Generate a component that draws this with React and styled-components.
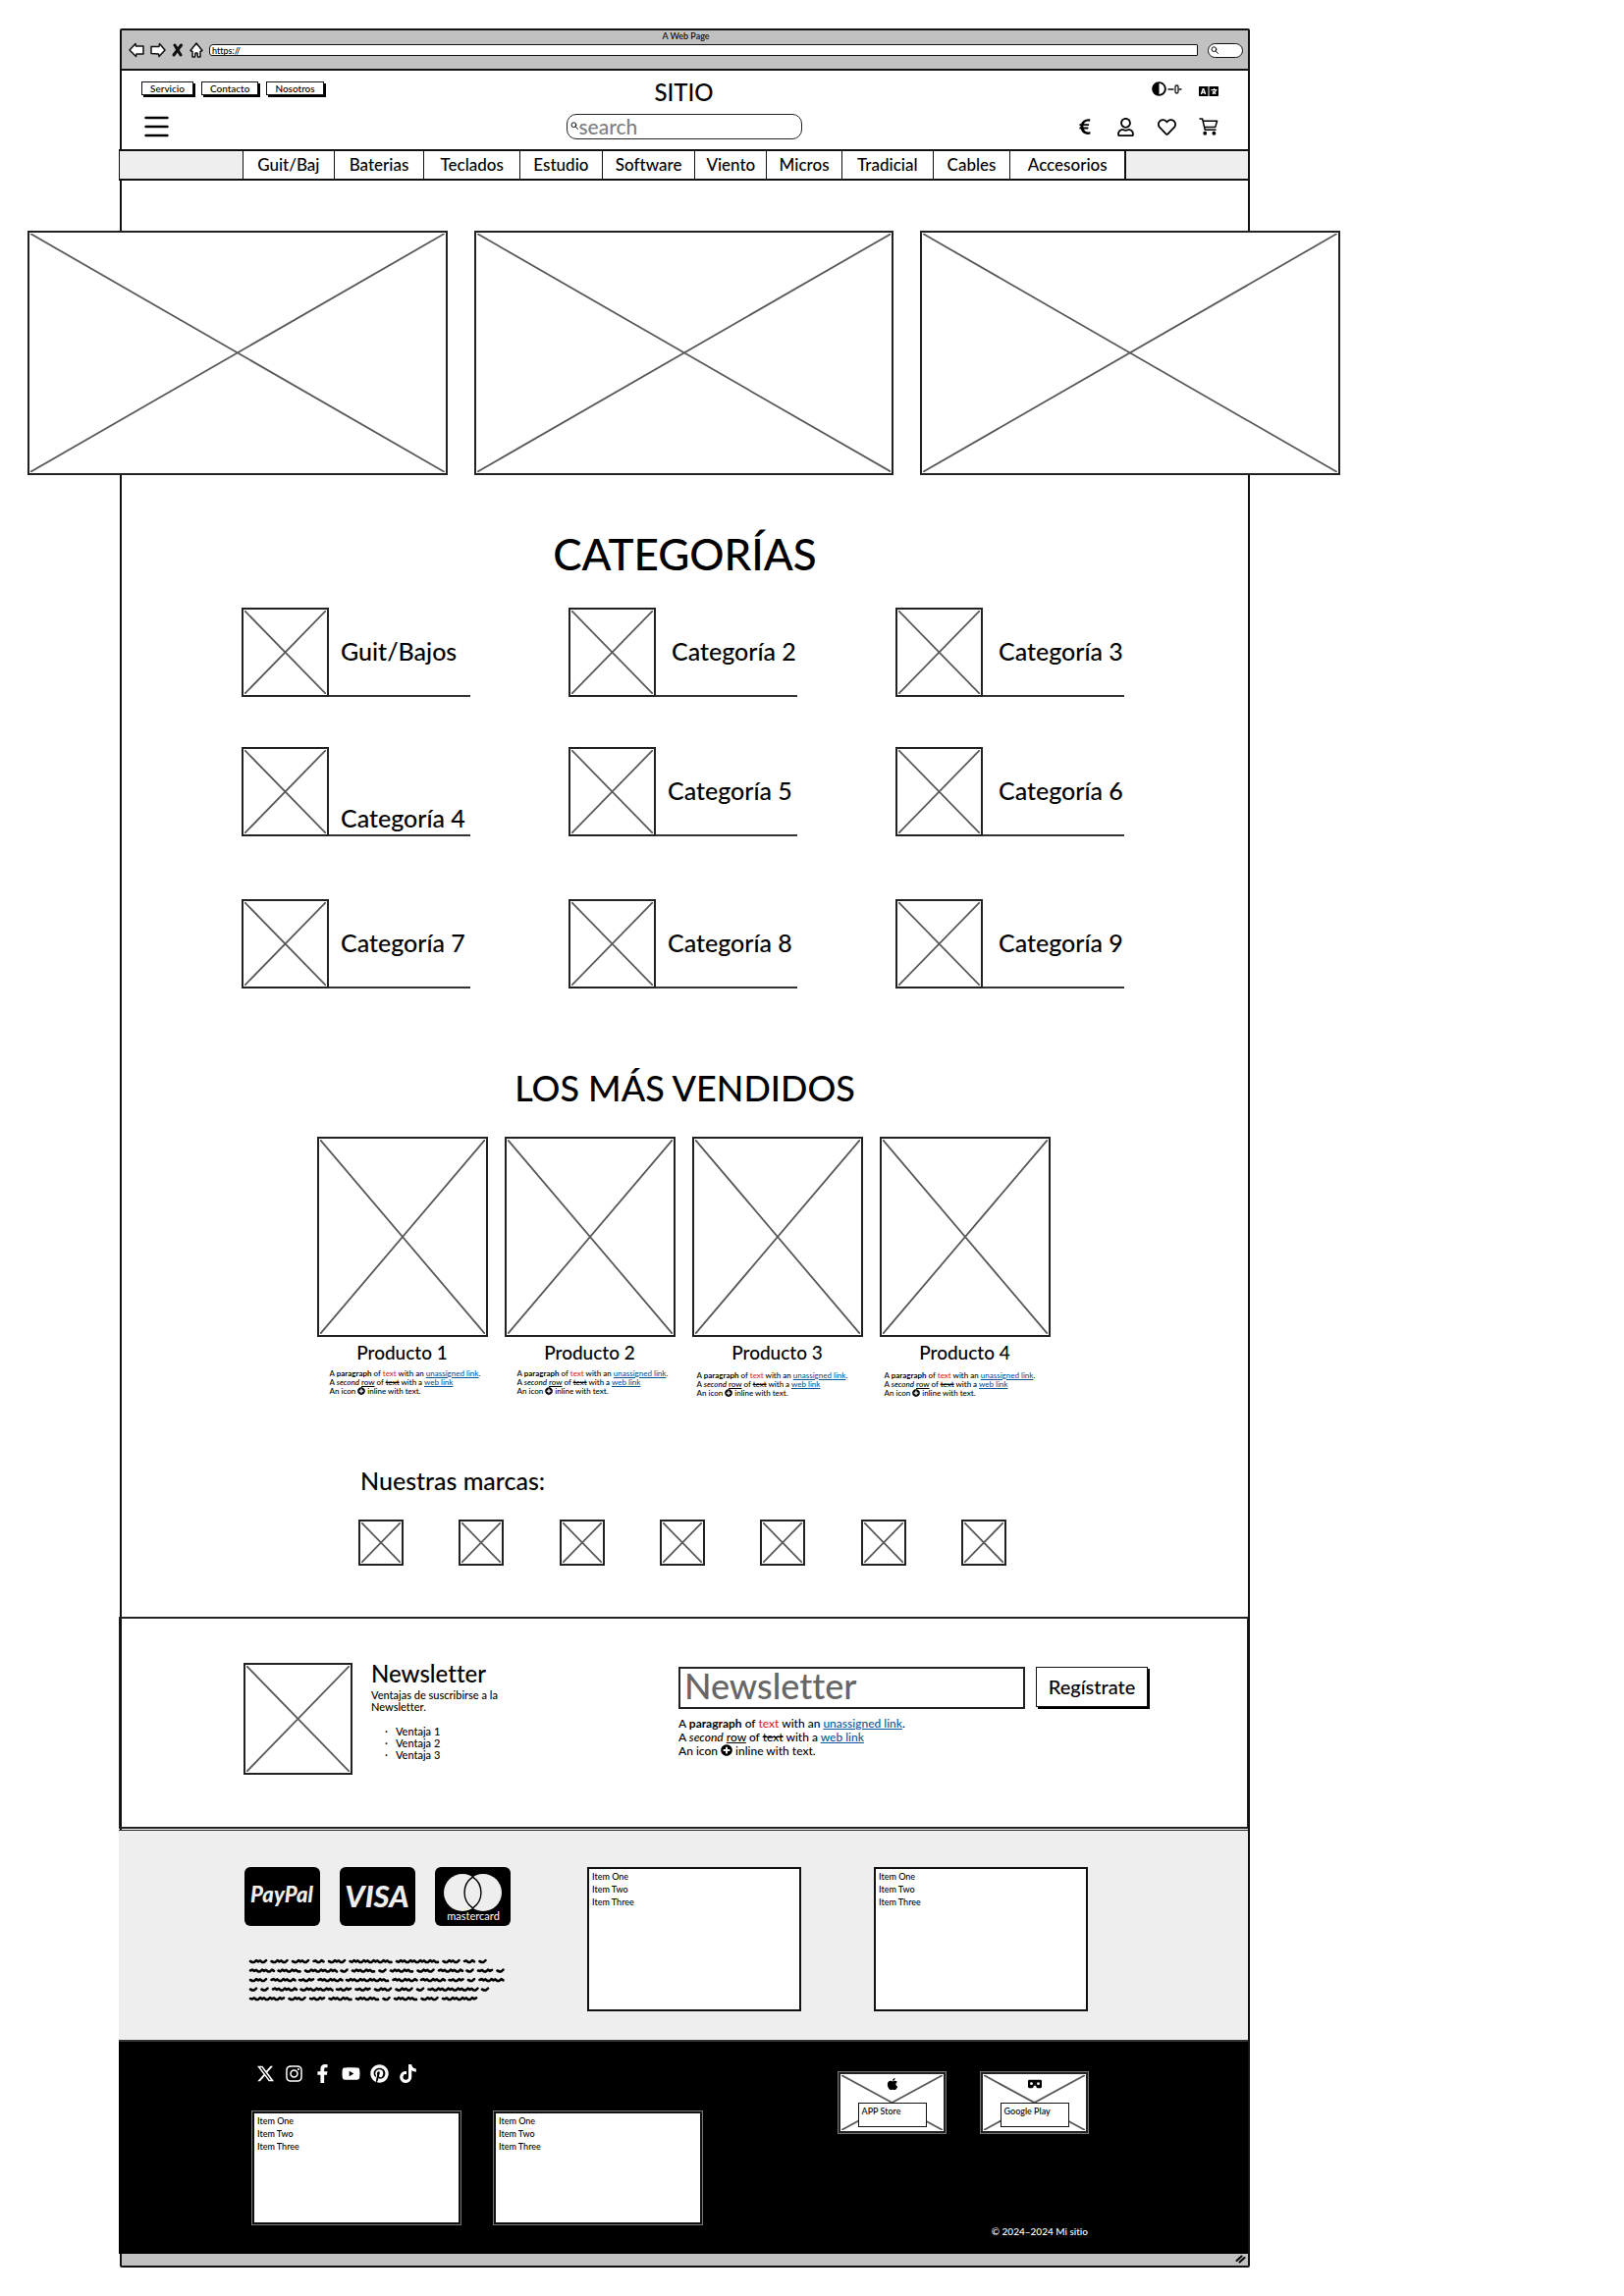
import React from "react";
import styled, { createGlobalStyle } from "styled-components";
import {
  FaAdjust,
  FaApple,
  FaEuroSign,
  FaFacebookF,
  FaInstagram,
  FaLanguage,
  FaPinterest,
  FaPlusCircle,
  FaRegHeart,
  FaRegUser,
  FaTiktok,
  FaYoutube,
} from "react-icons/fa";
import { FaXTwitter, FaVrCardboard } from "react-icons/fa6";

const GlobalStyle = createGlobalStyle`
  *, *::before, *::after { box-sizing: border-box; }
  body {
    margin: 0;
    background: #fff;
    color: #000;
    font-family: Lato, "Open Sans", sans-serif;
    font-weight: 500;
    font-variant-ligatures: none;
  }
  h1, h2, h3, p, ul { margin: 0; padding: 0; font-weight: 500; }
  ul { list-style: none; }
  button, input { font: inherit; color: inherit; margin: 0; }
  input { font-variant-ligatures: none; }
  svg { display: block; }
`;

/* ---------- browser window ---------- */

const Desktop = styled.div`
  padding: 29px 381px 30px 122px;
`;

const Window = styled.div`
  display: flex;
  flex-direction: column;
  border: 2px solid #111;
  border-radius: 2px;
`;

const Toolbar = styled.header`
  background: #c1c1c1;
  border-bottom: 2px solid #111;
  padding: 0 5px 11px 7px;
`;

const WindowTitle = styled.div`
  font-size: 9px;
  line-height: 12px;
  text-align: center;
`;

const AddressRow = styled.div`
  display: flex;
  align-items: center;
  gap: 6px;
  height: 16px;
`;

const PlainButton = styled.button`
  display: flex;
  align-items: center;
  justify-content: center;
  gap: ${(p) => p.$gap || 0}px;
  padding: 0;
  border: 0;
  background: none;
  cursor: pointer;
`;

const UrlInput = styled.input`
  flex: 1;
  min-width: 0;
  height: 12px;
  padding: 0 2px;
  border: 1px solid #111;
  border-radius: 4px 1px 1px 3px;
  background: #fff;
  font-size: 9px;
  line-height: 10px;
`;

const PillSearch = styled.label`
  display: flex;
  align-items: center;
  width: 36px;
  height: 15px;
  margin-left: 4px;
  padding: 0 2px;
  border: 1px solid #111;
  border-radius: 8px;
  background: #fff;
`;

const BareInput = styled.input`
  flex: 1;
  min-width: 0;
  height: 100%;
  padding: 0;
  border: 0;
  outline: 0;
  background: none;
  font-size: ${(p) => p.$size || 8}px;
  line-height: 22px;
  &::placeholder { color: #808080; opacity: 1; }
`;

const StatusBar = styled.div`
  display: flex;
  justify-content: flex-end;
  align-items: center;
  height: 12px;
  padding: 0 2px;
  background: #c1c1c1;
`;

/* ---------- site header ---------- */

const SiteHeader = styled.div`
  display: grid;
  grid-template-columns: 1fr 240px 1fr;
  grid-template-rows: 22px 26px;
  row-gap: 11px;
  padding: 11px 22px 10px 20px;
`;

const Group = styled.div`
  display: flex;
  align-items: ${(p) => p.$align || "center"};
  gap: ${(p) => p.$gap}px;
`;

const RightGroup = styled(Group)`
  justify-content: flex-end;
  padding-right: 8px;
`;

const SmallButton = styled.button`
  height: 14px;
  padding: 0 8px;
  border: 1px solid #111;
  background: #fff;
  box-shadow: 2px 2px 0 #000;
  font-size: 10px;
  line-height: 12px;
  cursor: pointer;
`;

const SiteName = styled.h1`
  font-size: 24px;
  line-height: 22px;
  text-align: center;
`;

const MenuButton = styled(PlainButton)`
  margin-left: 3px;
`;

const SearchBox = styled.label`
  display: flex;
  align-items: center;
  gap: 1px;
  padding: 0 3px 2px;
  border: 1px solid #222;
  border-radius: 10px;
`;

const NavBand = styled.nav`
  display: flex;
  height: 32px;
  margin-left: -3px;
  padding: 0 124px 0 125px;
  border: solid #111;
  border-width: 2px 0 2px 1px;
  background: #eee;
`;

const NavList = styled.ul`
  flex: 1;
  display: grid;
  grid-template-columns: 92fr 92fr 98fr 84fr 95fr 73fr 77fr 93fr 79fr 117fr;
  border-left: 1px solid #111;
  border-right: 2px solid #111;
  background: #fff;
`;

const NavItem = styled.li`
  display: flex;
  & + & { border-left: 1px solid #111; }
`;

const NavLink = styled.a`
  flex: 1;
  font-size: 17px;
  line-height: 28px;
  text-align: center;
  color: inherit;
  text-decoration: none;
`;

/* ---------- shared pieces ---------- */

const Frame = styled.div`
  flex: ${(p) => p.$flex || "none"};
  width: ${(p) => (p.$w ? `${p.$w}px` : "auto")};
  height: ${(p) => (p.$h ? `${p.$h}px` : "auto")};
  aspect-ratio: ${(p) => p.$ratio || "auto"};
  padding: 1px;
  border: 2px solid #222;
  background: #fff;
`;

const Cross = styled.svg`
  width: 100%;
  height: 100%;
`;

const SectionTitle = styled.h2`
  font-size: ${(p) => p.$size}px;
  line-height: ${(p) => p.$line}px;
  text-align: center;
`;

const Rich = styled.div`
  font-size: ${(p) => p.$size}px;
  line-height: ${(p) => p.$line}px;
  white-space: nowrap;
  a { color: #0b5699; }
  svg { display: inline-block; vertical-align: -1px; }
`;

const Red = styled.span`
  color: #d9252b;
`;

/* ---------- page body ---------- */

const Hero = styled.section`
  display: flex;
  gap: 27px;
  margin: 51px -94px 55px -96px;
`;

const Categories = styled.section`
  padding: 30px 126px 15px 122px;
`;

const CategoryRow = styled.ul`
  display: grid;
  grid-template-columns: repeat(3, 1fr);
  column-gap: 100px;
  margin-bottom: ${(p) => p.$after}px;
`;

const Category = styled.li`
  display: flex;
`;

const CategoryName = styled.a`
  flex: 1;
  display: flex;
  align-items: ${(p) => (p.$low ? "flex-end" : "center")};
  padding: 2px 0 2px ${(p) => (p.$far ? 16 : 12)}px;
  border-bottom: 2px solid #333;
  font-size: 25px;
  line-height: 30px;
  white-space: nowrap;
  color: inherit;
  text-decoration: none;
`;

const Products = styled.div`
  display: flex;
  justify-content: center;
  gap: 17px;
  padding: 28px 3px 69px 0;
`;

const Product = styled.article`
  width: 174px;
`;

const ProductName = styled.h3`
  margin-top: 4px;
  font-size: 19px;
  line-height: 24px;
  text-align: center;
`;

const ProductText = styled.div`
  padding: ${(p) => (p.$shifted ? "7px 0 0 5px" : "5px 0 0 13px")};
`;

const Brands = styled.section`
  align-self: center;
  width: 665px;
  padding: 0 5px 52px 0;
`;

const BrandsTitle = styled.h2`
  margin-bottom: 25px;
  padding-left: 2px;
  font-size: 25px;
  line-height: 30px;
`;

const BrandRow = styled.div`
  display: flex;
  justify-content: space-between;
`;

const NewsletterBand = styled.section`
  display: flex;
  justify-content: space-between;
  margin: 0 0 1px -3px;
  padding: 45px 101px 53px 126px;
  border: solid #222;
  border-width: 2px 1px 2px 1px;
`;

const NewsletterTitle = styled.h2`
  margin-bottom: 5px;
  font-size: 24px;
  line-height: 22px;
`;

const NewsletterCopy = styled.div`
  width: 136px;
  font-size: 11px;
  line-height: 12px;
`;

const BulletList = styled.ul`
  margin-top: 13px;
  padding-left: 14px;
`;

const Bullet = styled.li`
  display: flex;
  gap: 8px;
  &::before { content: "·"; }
`;

const SignUp = styled.form`
  display: flex;
  gap: 11px;
  margin: 4px 0 8px;
`;

const EmailInput = styled.input`
  width: 353px;
  height: 43px;
  padding: 0 4px 4px;
  border: 2px solid #222;
  font-size: 36px;
  &::placeholder { color: #666; opacity: 1; }
`;

const SignUpButton = styled.button`
  width: 114px;
  height: 41px;
  padding: 0;
  border: 1px solid #111;
  background: #fff;
  box-shadow: 2px 2px 0 #000;
  font-size: 20px;
  cursor: pointer;
`;

/* ---------- footer ---------- */

const PaymentBand = styled.section`
  display: flex;
  gap: 74px;
  margin-left: -3px;
  padding: 37px 163px 29px 128px;
  border-top: 1px solid #222;
  border-bottom: 2px solid #333;
  background: #eee;
`;

const Payments = styled.div`
  flex: 1;
`;

const CardRow = styled.div`
  display: flex;
  gap: 20px;
  margin-bottom: 32px;
`;

const ItemList = styled.ul`
  width: ${(p) => p.$w}px;
  height: ${(p) => p.$h}px;
  padding: 1px 3px;
  border: 2px solid #111;
  outline: ${(p) => (p.$outlined ? "1px solid #777" : "none")};
  background: #fff;
  color: #000;
  font-size: 9px;
  line-height: 13px;
`;

const Footer = styled.footer`
  display: flex;
  justify-content: space-between;
  margin-left: -3px;
  padding: 22px 163px 16px 136px;
  background: #000;
  color: #fff;
`;

const FooterSide = styled.div`
  display: flex;
  flex-direction: column;
`;

const Social = styled.div`
  display: flex;
  gap: 10px;
  height: 22px;
  margin: 0 0 27px 4px;
`;

const SocialLink = styled.a`
  display: flex;
  align-items: center;
  justify-content: center;
  width: 19px;
  color: #fff;
`;

const FooterLists = styled.div`
  display: flex;
  gap: 34px;
  margin-bottom: 14px;
`;

const StoreSide = styled(FooterSide)`
  justify-content: space-between;
  padding-top: 9px;
`;

const StoreRow = styled.div`
  display: flex;
  gap: 36px;
`;

const StoreLink = styled.a`
  display: grid;
  width: 109px;
  outline: 1px solid #777;
  color: #000;
  text-decoration: none;
  & > * { grid-area: 1 / 1; }
`;

const StoreContent = styled.span`
  display: flex;
  flex-direction: column;
  align-items: center;
  justify-content: space-between;
  padding: 5px 0 6px;
`;

const StoreName = styled.span`
  width: 70px;
  height: 25px;
  padding: 1px 3px;
  border: 1px solid #111;
  background: #fff;
  font-size: 9px;
  line-height: 13px;
`;

const Copyright = styled.small`
  font-size: 10px;
  line-height: 14px;
  text-align: right;
`;

/* ---------- drawings ---------- */

const Placeholder = (props) => (
  <Frame {...props}>
    <Cross viewBox="0 0 100 100" preserveAspectRatio="none" aria-hidden="true">
      <path
        d="M0 0 L100 100 M100 0 L0 100"
        fill="none"
        stroke="#5a5a5a"
        strokeWidth="1.8"
        vectorEffect="non-scaling-stroke"
      />
    </Cross>
  </Frame>
);

const outline = { fill: "#fff", stroke: "#111", strokeWidth: 1.5, strokeLinejoin: "round" };

const ArrowLeft = () => (
  <svg width="16" height="16" viewBox="0 0 16 16">
    <path d="M1 8 L7 1.5 L7.5 4 L15 4 L15 12 L8 12 L7.5 14.5 Z" {...outline} />
  </svg>
);

const ArrowRight = () => (
  <svg width="16" height="16" viewBox="0 0 16 16">
    <path d="M15 8 L9.5 1.5 L9 4.5 L1 4.5 L1 11.5 L8.5 12 L9 14.5 Z" {...outline} />
  </svg>
);

const Stop = () => (
  <svg width="12" height="14" viewBox="0 0 12 14">
    <path d="M3 2 L9 12 M9.5 2 L2 12" stroke="#111" strokeWidth="3" strokeLinecap="round" />
  </svg>
);

const Home = () => (
  <svg width="14" height="16" viewBox="0 0 14 16">
    <path d="M7 1 L13 8.5 L11 9.5 L11 15 L8.5 15 L8 11 L6 11 L5.5 15 L3 15 L3 9.5 L1 8.5 Z" {...outline} />
  </svg>
);

const Magnifier = ({ size = 8 }) => (
  <svg width={size} height={size} viewBox="0 0 8 8" fill="none" stroke="#111" strokeLinecap="round">
    <circle cx="3.4" cy="3.2" r="2.4" />
    <path d="M5.2 5 L7.4 7.4" />
  </svg>
);

const Hamburger = () => (
  <svg width="25" height="22" viewBox="0 0 25 22">
    <path d="M1.5 2 H23.5 M1.5 11 H23.5 M1.5 20 H23.5" stroke="#000" strokeWidth="2.4" strokeLinecap="round" />
  </svg>
);

const SliderMark = () => (
  <svg width="15" height="10" viewBox="0 0 15 10" fill="none" stroke="#111" strokeWidth="1.3">
    <path d="M0.5 5 H6.5 M11.5 5 H14.5" />
    <rect x="8" y="1" width="3" height="8" rx="1.4" />
  </svg>
);

const Cart = () => (
  <svg width="20" height="18" viewBox="0 0 20 18" fill="none" stroke="#000" strokeWidth="1.5" strokeLinecap="round" strokeLinejoin="round">
    <path d="M1 1 H3.6 L6.2 12.2 H17 M4.2 3.2 H18.6 L16.8 9.4 H5.6" />
    <circle cx="6.2" cy="15.8" r="1.2" fill="#000" />
    <circle cx="15.4" cy="15.8" r="1.2" fill="#000" />
  </svg>
);

const CardSvg = ({ label, children }) => (
  <svg width="77" height="60" viewBox="0 0 77 60" role="img" aria-label={label}>
    <rect width="77" height="60" rx="6" fill="#000" />
    {children}
  </svg>
);

const cardText = { fill: "#eee", textAnchor: "middle", fontFamily: "Lato, sans-serif" };

const PayPalCard = () => (
  <CardSvg label="PayPal">
    <text x="38" y="36" fontSize="22" fontWeight="900" fontStyle="italic" {...cardText}>PayPal</text>
  </CardSvg>
);

const VisaCard = () => (
  <CardSvg label="VISA">
    <text x="38" y="41" fontSize="31" fontWeight="900" fontStyle="italic" {...cardText}>VISA</text>
  </CardSvg>
);

const MastercardCard = () => (
  <CardSvg label="mastercard">
    <circle cx="28" cy="26" r="19" fill="#eee" />
    <circle cx="49" cy="26" r="19" fill="#eee" />
    <path
      d="M38.5 10.2 A19 19 0 0 1 38.5 41.8 A19 19 0 0 1 38.5 10.2 Z"
      fill="#eee"
      stroke="#000"
      strokeWidth="1.4"
    />
    <text x="39" y="54" fontSize="11" fontWeight="500" {...cardText}>mastercard</text>
  </CardSvg>
);

/* word lengths of the scribbled filler lines */
const scribbleRows = [
  [18, 18, 18, 12, 18, 44, 44, 18, 12, 8],
  [25, 24, 33, 8, 24, 8, 24, 18, 25, 8, 16, 8],
  [18, 25, 16, 25, 44, 25, 25, 16, 8, 25],
  [8, 8, 25, 33, 16, 16, 18, 18, 8, 51, 8],
  [36, 18, 16, 24, 24, 8, 24, 18, 36],
];

const scribblePath = (words, y) => {
  let x = 1;
  let d = "";
  words.forEach((w) => {
    d += `M${x} ${y}`;
    for (let s = 2; s <= w - 1; s += 2) d += ` L${x + s} ${y + [0.9, -0.9, 0.4, -0.6, 1][(s / 2 + w) % 5]}`;
    x += w + 3.5;
  });
  return d;
};

const Scribble = () => (
  <svg width="270" height="46" viewBox="-5 0 270 46" role="img" aria-label="Texto">
    {scribbleRows.map((words, i) => (
      <path
        key={i}
        d={scribblePath(words, 4 + i * 9.5)}
        fill="none"
        stroke="#000"
        strokeWidth="2.6"
        strokeLinecap="round"
        strokeLinejoin="round"
      />
    ))}
  </svg>
);

const Grip = () => (
  <svg width="11" height="9" viewBox="0 0 11 9" stroke="#000" strokeWidth="2" strokeLinecap="round">
    <path d="M1.5 6 L6.5 1.5 M4.5 7.5 L9.5 3" />
  </svg>
);

/* ---------- content ---------- */

const RichText = ({ size, line }) => (
  <Rich $size={size} $line={line}>
    <p>
      A <b>paragraph</b> of <Red>text</Red> with an <a href="#unassigned">unassigned link</a>.
    </p>
    <p>
      A <i>second</i> <u>row</u> of <s>text</s> with a <a href="#web">web link</a>
    </p>
    <p>
      An icon <FaPlusCircle size={size} /> inline with text.
    </p>
  </Rich>
);

const Items = (props) => (
  <ItemList {...props}>
    <li>Item One</li>
    <li>Item Two</li>
    <li>Item Three</li>
  </ItemList>
);

const menu = [
  "Guit/Baj", "Baterias", "Teclados", "Estudio", "Software",
  "Viento", "Micros", "Tradicial", "Cables", "Accesorios",
];

const categoryRows = [
  {
    after: 51,
    items: [
      { name: "Guit/Bajos" },
      { name: "Categoría 2", far: true },
      { name: "Categoría 3", far: true },
    ],
  },
  {
    after: 64,
    items: [
      { name: "Categoría 4", low: true },
      { name: "Categoría 5" },
      { name: "Categoría 6", far: true },
    ],
  },
  {
    after: 64,
    items: [
      { name: "Categoría 7" },
      { name: "Categoría 8" },
      { name: "Categoría 9", far: true },
    ],
  },
];

const products = [
  { name: "Producto 1" },
  { name: "Producto 2" },
  { name: "Producto 3", shifted: true },
  { name: "Producto 4", shifted: true },
];

const social = [
  ["X", FaXTwitter],
  ["Instagram", FaInstagram],
  ["Facebook", FaFacebookF],
  ["YouTube", FaYoutube],
  ["Pinterest", FaPinterest],
  ["TikTok", FaTiktok],
];

export default function App() {
  return (
    <Desktop>
      <GlobalStyle />
      <Window>
        <Toolbar>
          <WindowTitle>A Web Page</WindowTitle>
          <AddressRow>
            <PlainButton aria-label="Atrás"><ArrowLeft /></PlainButton>
            <PlainButton aria-label="Adelante"><ArrowRight /></PlainButton>
            <PlainButton aria-label="Detener"><Stop /></PlainButton>
            <PlainButton aria-label="Inicio"><Home /></PlainButton>
            <UrlInput aria-label="Dirección" defaultValue="https://" />
            <PillSearch>
              <Magnifier />
              <BareInput aria-label="Buscar en la web" />
            </PillSearch>
          </AddressRow>
        </Toolbar>

        <SiteHeader>
          <Group $gap={8} $align="flex-start">
            <SmallButton>Servicio</SmallButton>
            <SmallButton>Contacto</SmallButton>
            <SmallButton>Nosotros</SmallButton>
          </Group>
          <SiteName>SITIO</SiteName>
          <RightGroup $gap={17} $align="flex-start">
            <PlainButton aria-label="Contraste" $gap={1}>
              <FaAdjust size={15} />
              <SliderMark />
            </PlainButton>
            <PlainButton aria-label="Idioma"><FaLanguage size={20} /></PlainButton>
          </RightGroup>
          <Group $gap={0}>
            <MenuButton aria-label="Menú"><Hamburger /></MenuButton>
          </Group>
          <SearchBox>
            <Magnifier />
            <BareInput aria-label="Buscar" placeholder="search" $size={21} />
          </SearchBox>
          <RightGroup $gap={23}>
            <PlainButton aria-label="Moneda"><FaEuroSign size={18} /></PlainButton>
            <PlainButton aria-label="Cuenta"><FaRegUser size={19} /></PlainButton>
            <PlainButton aria-label="Favoritos"><FaRegHeart size={19} /></PlainButton>
            <PlainButton aria-label="Carrito"><Cart /></PlainButton>
          </RightGroup>
        </SiteHeader>

        <NavBand>
          <NavList>
            {menu.map((m) => (
              <NavItem key={m}><NavLink href="#menu">{m}</NavLink></NavItem>
            ))}
          </NavList>
        </NavBand>

        <Hero>
          <Placeholder $flex="1" $ratio="428 / 249" />
          <Placeholder $flex="1" $ratio="428 / 249" />
          <Placeholder $flex="1" $ratio="428 / 249" />
        </Hero>

        <SectionTitle $size={44} $line={50}>CATEGORÍAS</SectionTitle>
        <Categories>
          {categoryRows.map((row, i) => (
            <CategoryRow key={i} $after={row.after}>
              {row.items.map((c) => (
                <Category key={c.name}>
                  <Placeholder $w={89} $h={91} />
                  <CategoryName href="#categoria" $far={c.far} $low={c.low}>{c.name}</CategoryName>
                </Category>
              ))}
            </CategoryRow>
          ))}
        </Categories>

        <SectionTitle $size={36} $line={44}>LOS MÁS VENDIDOS</SectionTitle>
        <Products>
          {products.map((p) => (
            <Product key={p.name}>
              <Placeholder $h={204} />
              <ProductName>{p.name}</ProductName>
              <ProductText $shifted={p.shifted}><RichText size={8} line={9} /></ProductText>
            </Product>
          ))}
        </Products>

        <Brands>
          <BrandsTitle>Nuestras marcas:</BrandsTitle>
          <BrandRow>
            {[1, 2, 3, 4, 5, 6, 7].map((n) => <Placeholder key={n} $w={46} $h={47} />)}
          </BrandRow>
        </Brands>

        <NewsletterBand>
          <Group $gap={19} $align="flex-start">
            <Placeholder $w={111} $h={114} />
            <NewsletterCopy>
              <NewsletterTitle>Newsletter</NewsletterTitle>
              <p>Ventajas de suscribirse a la Newsletter.</p>
              <BulletList>
                <Bullet>Ventaja 1</Bullet>
                <Bullet>Ventaja 2</Bullet>
                <Bullet>Ventaja 3</Bullet>
              </BulletList>
            </NewsletterCopy>
          </Group>
          <div>
            <SignUp>
              <EmailInput aria-label="Newsletter" placeholder="Newsletter" />
              <SignUpButton type="button">Regístrate</SignUpButton>
            </SignUp>
            <RichText size={12} line={14} />
          </div>
        </NewsletterBand>

        <PaymentBand>
          <Payments>
            <CardRow>
              <PayPalCard />
              <VisaCard />
              <MastercardCard />
            </CardRow>
            <Scribble />
          </Payments>
          <Items $w={218} $h={147} />
          <Items $w={218} $h={147} />
        </PaymentBand>

        <Footer>
          <FooterSide>
            <Social>
              {social.map(([name, Icon]) => (
                <SocialLink key={name} href="#social" aria-label={name}><Icon size={19} /></SocialLink>
              ))}
            </Social>
            <FooterLists>
              <Items $w={212} $h={115} $outlined />
              <Items $w={212} $h={115} $outlined />
            </FooterLists>
          </FooterSide>
          <StoreSide>
            <StoreRow>
              <StoreLink href="#app-store">
                <Placeholder $h={62} />
                <StoreContent>
                  <FaApple size={14} />
                  <StoreName>APP Store</StoreName>
                </StoreContent>
              </StoreLink>
              <StoreLink href="#google-play">
                <Placeholder $h={62} />
                <StoreContent>
                  <FaVrCardboard size={14} />
                  <StoreName>Google Play</StoreName>
                </StoreContent>
              </StoreLink>
            </StoreRow>
            <Copyright>© 2024–2024 Mi sitio</Copyright>
          </StoreSide>
        </Footer>

        <StatusBar><Grip /></StatusBar>
      </Window>
    </Desktop>
  );
}
